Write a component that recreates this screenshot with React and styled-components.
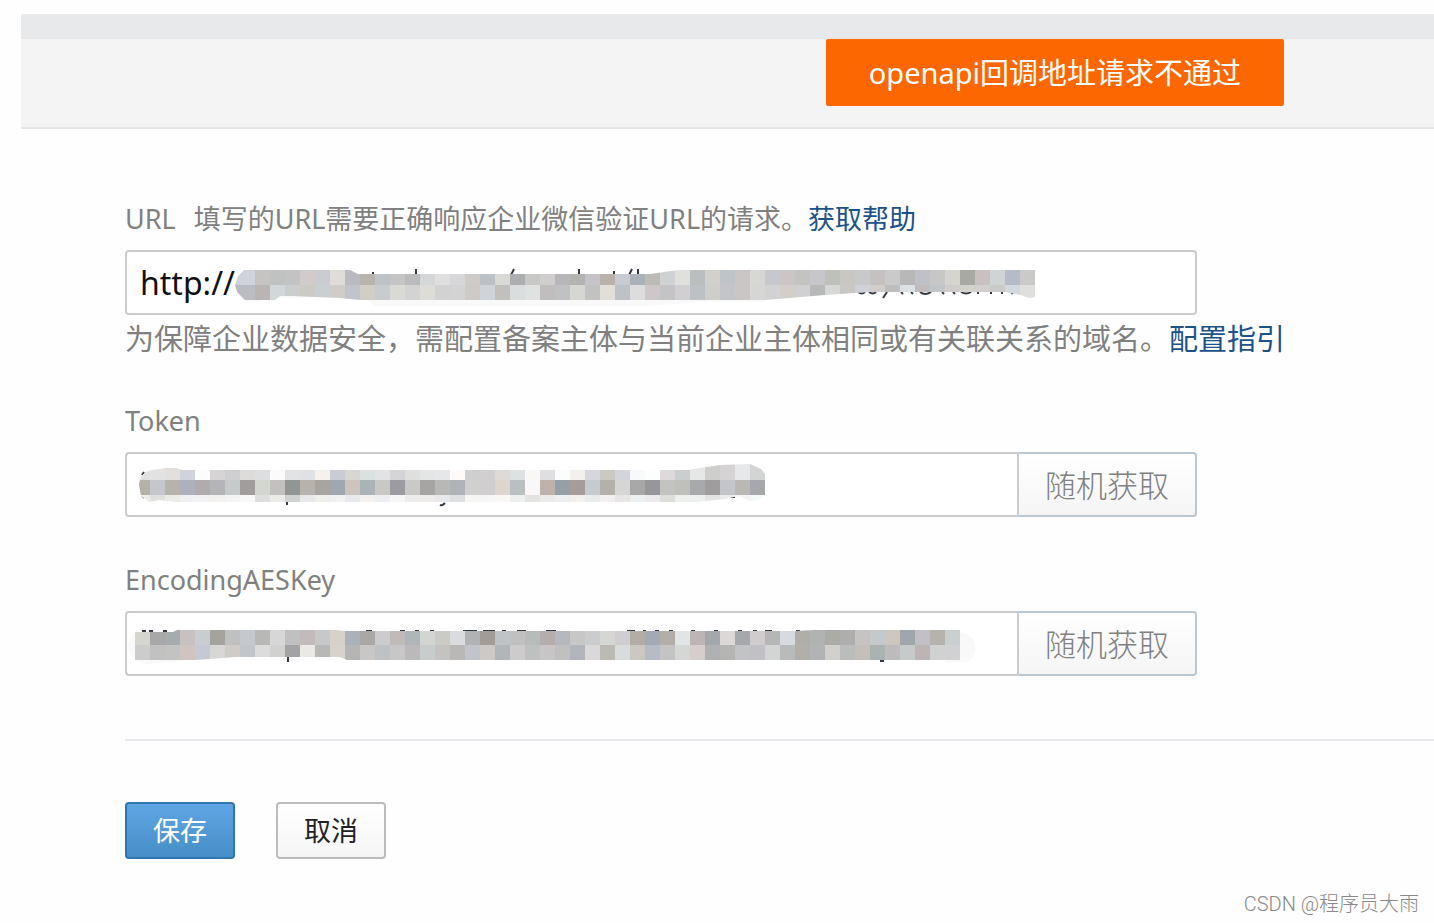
import React from "react";
import styled, { createGlobalStyle, css } from "styled-components";

const GlobalStyle = createGlobalStyle`
  *, *::before, *::after { box-sizing: border-box; }
  body {
    margin: 0;
    background: #fefefe;
    color: #808080;
    font-family: "Noto Sans", "Noto Sans CJK SC", sans-serif;
    font-size: 27px;
    line-height: 36px;
  }
  button, input { font-family: inherit; }
`;

const Page = styled.div`
  min-height: 100vh;
  padding: 14px 0 0 21px;
  display: flex;
  flex-direction: column;
`;

const TopStrip = styled.div`
  height: 25px;
  background: #e8e9eb;
  border-bottom: 2px solid #e6e6e6;
`;

const Header = styled.header`
  height: 90px;
  padding-right: 150px;
  display: flex;
  justify-content: flex-end;
  align-items: flex-start;
  background: #f4f4f4;
  border-bottom: 2px solid #e1e5e8;
`;

const Toast = styled.div`
  padding: 16px 43px 15px;
  border-radius: 2px;
  background: #fc6701;
  color: #fff;
  font-size: 29px;
  white-space: nowrap;
`;

const Form = styled.form`
  padding: 72px 0 0 104px;
  display: flex;
  flex-direction: column;
`;

const Field = styled.div`
  max-width: 1072px;
  margin-bottom: ${(p) => p.$gap}px;
`;

const Caption = styled.div`
  display: flex;
  margin-bottom: 13px;
  white-space: nowrap;
`;

const CaptionLabel = styled.label`
  display: flex;
  gap: 18px;
`;

const Hint = styled.p`
  margin: 6px 0 0;
  font-size: 29px;
  white-space: nowrap;
`;

const Link = styled.a`
  color: #1c5287;
  text-decoration: none;
`;

const InputGroup = styled.div`
  display: flex;
  height: 65px;
`;

const InputBox = styled.div`
  position: relative;
  flex: 1;
  min-width: 0;
`;

const TextInput = styled.input`
  width: 100%;
  height: 100%;
  padding: 0 13px;
  border: 2px solid #cbcbcb;
  border-radius: ${(p) => (p.$joined ? "4px 0 0 4px" : "4px")};
  ${(p) => p.$joined && css`border-right: 0;`}
  background: #fff;
  color: #111;
  font-size: 32px;
  outline: none;
`;

const Mask = styled.svg`
  position: absolute;
  left: 0;
  top: 0;
  pointer-events: none;
`;

const Button = styled.button`
  padding: 0;
  border: 2px solid #bcbcbc;
  border-radius: 4px;
  background: linear-gradient(#ffffff, #f5f5f5);
  color: #222;
  font-size: 27px;
  line-height: 36px;
  cursor: pointer;
`;

const ActionButton = styled(Button)`
  width: 110px;
  height: 57px;
  ${(p) => p.$primary && css`
    border-color: #2e77ae;
    background: linear-gradient(#5fa5e4, #478fc7);
    color: #fff;
  `}
`;

const RandomButton = styled(Button)`
  width: 180px;
  border-color: #bbc7d3;
  border-left-color: #cbcbcb;
  border-radius: 0 4px 4px 0;
  color: #808080;
  font-size: 31px;
  font-weight: 300;
`;

const Divider = styled.hr`
  width: 100%;
  height: 2px;
  margin: 0 0 61px;
  border: 0;
  background: #e4e6e9;
`;

const Actions = styled.div`
  display: flex;
  gap: 41px;
`;

const Watermark = styled.footer`
  margin-top: auto;
  padding: 0 15px 5px;
  color: #888;
  font-family: Roboto, "Noto Sans CJK SC", sans-serif;
  font-size: 20px;
  font-weight: 300;
  line-height: 28px;
  text-align: right;
`;

const urlMask = {
  id: "url-mask",
  width: 916,
  x: 115,
  rows: [
    { y: 20, h: 15, colors: "d0d3d9 c5c4c3 c0c2c1 c3c3c4 d0cccc cbccd1 dfdcd9 babbc1 b9b3ad bdc3c7 c5c5c6 bbbbbd d3d7d8 dfdfdf d7d6d8 d0cac8 bbc1c7 d9dad6 adaeb0 c8c8c6 d0cfcd b7b7b9 b3b3b1 c6c4c8 b9b1aa c8ccd2 abb1b9 bdbbb8 d0d1d3 e0e1dc babebf d1d0ca bfc4c8 c9c6c5 d7d7d5 c6c8cd cbc6c6 c3c3c1 c7c7cb bec0ba c8c7c3 c7c9cb c5c1c0 cacacb b8b8b8 bfc1c7 c7c7c7 d5d4cf a9a9a4 cac0c0 d1d4d5 b5bcc7 cacac9" },
    { y: 35, h: 15, colors: "bbbcc1 b9b5b5 d2d7da cccdcd cccac5 cacfd2 d0cdc8 c1c4ca d1cec8 c8cccf d9dad6 d2d3d2 dddcd9 d2d2d3 d3d3d3 cfcac8 cfd3dc c1c0bc d9dddd e0e1e1 bfbdbe c0c1c3 d6d7d2 c2c2c3 e2deda bec2c6 dddddd cec7c9 c4c4c6 d1cfd1 bbc1c4 cfcfca c3c5c8 c9c6c5 d6d6d4 d2d2d3 d2cfca d0d0d2 b7b9b9 d7d8d5 c9c8c5 cfd2d9 d0cdcb c0bdbe dbe0e4 c0bcbd c1c5c9 cfccc9 d3d1cc d2cecd cbcacb d3d8dd dfdfde" },
  ],
  outline: "M110 35L113 26L119 20H225L233 24H525L553 20H910V47L905 48L895 45L880 42H745L700 45L640 50H235L215 48L167 46L155 46L150 50H120L112 42Z",
  halo: "M112 42Q117 54 130 52L140 48H240L250 56H520L580 52H640V46H215Z",
  marks: "M248 22v3M291 19v6M389 19l-3 6M454 19v6M489 21v4M507 19l-3 6M513 19v6M733 42q4 3 7 0M744 42q4 3 7 0M762 42l-4 6M776 42l2 2M786 42l2 2M795 42q5 4 11 0M817 42l2 2M828 42l2 2M836 42q5 3 10 0M853 42v2M866 42v2M877 42v2M886 42l2 2M893 42q5 4 10 0",
};

const tokenMask = {
  id: "token-mask",
  width: 660,
  x: 10,
  rows: [
    { y: 12, h: 16, colors: "e1e1df e2e2e2 e2dfdd d0d3d9 fcfcfd d6d4d4 cfcfd1 dedbdb dcdee0 fbfbfb e2e3e4 dfe2e5 f5f1ec c9ccd2 d7d6d3 dae1e0 e3e3e3 d5d5d7 dfdfde e4e5e5 e6e7e8 fdfaf8 cfcfcf d1cfd0 dedad7 dde1e1 f9f8f7 dfdfe2 fbfdfc f4f0ee d5d7dc cac9c4 d4d5da f8f9fb fcfdfd ded9da cacecf e5e8e7 cecfcd d5d3d4 e6e8e9 d3d5d4" },
    { y: 28, h: 15, colors: "b5b2a9 c5c7cc b8b2ac acb1bb b1acac b5b4b8 c5cacb a19d9c d4d6d0 c2c1c0 919694 b8b2ac a8a49f a1a7b0 cdc4bf aab3b5 c8c8c5 9c9ba1 c9c9c7 a6a5a4 b8b8b6 b0b3b8 d0d0d0 d0cecf ddd6cc b8c0c4 f9f8f7 bdb3aa 969fa6 a69c9b c6cbd0 b4b0ab d6d6d4 a8a8a8 96969b c3c4c2 bfc0bb a7a9ab 9f9d9e c3c5ca bbb8b3 a7a8ae" },
    { y: 43, h: 7, colors: "eeeeec e0e0df ebebe8 f0f0f2 f1f1f4 f3f1f0 f4f4f4 f8f8f8 dededf ebebe7 d0d1d1 e8e8e9 eeeeea f1f1f1 e8e9ed f3f2f0 eeeff2 f5f6f5 ececec efebeb e8e9ea dedfe1 f6f6f4 f5f6f5 faf8f5 edf0ee e3e3e2 ebebe9 eceef0 f3f1ed e9ebed f2f0f0 e7e6e4 edf0f0 eceaec dededb eef0ee edefef e4e4e4 eceaea f3f4f6 f5f8f9" },
  ],
  outline: "M14 33Q15 20 27 18L42 16H52L57 18H563L575 16L595 13L625 12L636 17L640 22V43Q632 51 625 49L614 44L600 47L570 50H50L34 48L24 50L16 44Z",
  marks: "M17 23l2-3M17 43l2 3M162 50v3M320 51q-3 3-5 2M602 45H610",
};

const keyMask = {
  id: "key-mask",
  width: 860,
  x: 10,
  rows: [
    { y: 19, h: 15, colors: "d5d6d0 a8a8a8 a6abae c7c1c1 c8cdd0 a5a39e bec1bf c5c8cf b8b8b7 d7d7d7 c0c0c0 c2bbbb c7c9c8 d8d1c9 abb1ba a9a8a7 cccbce c0bab8 afb5b9 d2d5d1 cbcbc6 d9dbdf b1b2b4 a59b95 bfc3c5 c0c0c0 b7bbb9 b3adad b5b8be c7c7c7 cbccce d6d7d4 d0ced0 b3ada5 a3aab5 b3aea9 e1e5e6 bcb5b5 a2a8ac dcd8d8 a7a8ab d0cccd b5b6b5 d7dae0 b0aea9 b1b3b3 abaca6 aeaeae c5c4c3 c4cacc cdc7bf a0a7ac c0c0c6 b6b2ac cacfd0" },
    { y: 34, h: 15, colors: "cdcccc c1c1c1 c3c3c1 cec5c1 c5c9d2 d7d7d5 d1cbc7 c1c6cb dcdcdd d1d1d0 a3a3a5 ebe9e6 b8b9b7 d8d2cd b5b5b5 c9c7c6 bec2c4 c6c7c6 bbb9ba c9cccd c4c3c2 bab8b6 c1c5cb cdc9c4 b1b6b9 cdcbcc bec1c0 c8c5c6 c1c0c0 b2b5bb dad8d9 bbbab3 d8dcdd cbc8c2 b7bbc6 c4c4c4 d5d7d5 d5cecd b0b1b3 b5b5b3 c2c3c5 c1c0c4 d2d5d3 b9bbba b2aea9 b1b3b5 d1d0cc bbbcbc c5bfbc aab3b2 bebbbd c6caca bdb5b5 d0d2d1 d1d1d3" },
  ],
  outline: "M10 21H48L52 19H210L220 20H670L690 19H835V49H222L215 46H110L85 48L70 49H10Z",
  halo: "M10 21Q-4 36 10 49L20 53L60 50V21ZM835 22Q850 24 850 36Q850 48 840 51L820 52V22Z",
  marks: "M17 20h4M24 20h4M38 20h4M241 20h6M275 20h5M290 20h4M305 20h4M338 20h14M358 20h12M377 20h4M392 20h9M421 20h10M502 20h8M518 20h3M530 20h4M544 20h4M566 20h4M589 20h4M613 20h4M628 20h4M640 20h7M671 20h4M688 20h4M826 20h8M163 46v5M755 50h4",
};

function RedactionMask({ mask }) {
  return (
    <Mask width={mask.width} height="65" aria-hidden="true">
      <defs>
        <clipPath id={mask.id}>
          <path d={mask.outline} />
        </clipPath>
      </defs>
      {mask.halo && <path d={mask.halo} fill="#f9f9fa" />}
      <path d={mask.marks} fill="none" stroke="#343a44" strokeWidth="2" />
      <g clipPath={`url(#${mask.id})`} shapeRendering="crispEdges">
        {mask.rows.map((row) =>
          row.colors.split(" ").map((color, i) => (
            <rect
              key={`${row.y}-${i}`}
              x={mask.x + i * 15 - (i === 0 ? 8 : 0)}
              y={row.y}
              width={i === 0 ? 23 : 15}
              height={row.h}
              fill={`#${color}`}
            />
          ))
        )}
      </g>
    </Mask>
  );
}

function SecretField({ id, label, mask, gap }) {
  return (
    <Field $gap={gap}>
      <Caption>
        <label htmlFor={id}>{label}</label>
      </Caption>
      <InputGroup>
        <InputBox>
          <TextInput id={id} type="text" $joined />
          <RedactionMask mask={mask} />
        </InputBox>
        <RandomButton type="button">随机获取</RandomButton>
      </InputGroup>
    </Field>
  );
}

export default function App() {
  return (
    <>
      <GlobalStyle />
      <Page>
        <TopStrip />
        <Header>
          <Toast role="alert">openapi回调地址请求不通过</Toast>
        </Header>
        <Form onSubmit={(e) => e.preventDefault()}>
          <Field $gap={46}>
            <Caption>
              <CaptionLabel htmlFor="url">
                <span>URL</span>
                <span>填写的URL需要正确响应企业微信验证URL的请求。</span>
              </CaptionLabel>
              <Link href="#help">获取帮助</Link>
            </Caption>
            <InputGroup>
              <InputBox>
                <TextInput id="url" type="text" defaultValue="http://" />
                <RedactionMask mask={urlMask} />
              </InputBox>
            </InputGroup>
            <Hint>
              为保障企业数据安全，需配置备案主体与当前企业主体相同或有关联关系的域名。
              <Link href="#guide">配置指引</Link>
            </Hint>
          </Field>
          <SecretField id="token" label="Token" mask={tokenMask} gap={45} />
          <SecretField id="aes-key" label="EncodingAESKey" mask={keyMask} gap={63} />
          <Divider />
          <Actions>
            <ActionButton type="submit" $primary>保存</ActionButton>
            <ActionButton type="button">取消</ActionButton>
          </Actions>
        </Form>
        <Watermark>CSDN @程序员大雨</Watermark>
      </Page>
    </>
  );
}
